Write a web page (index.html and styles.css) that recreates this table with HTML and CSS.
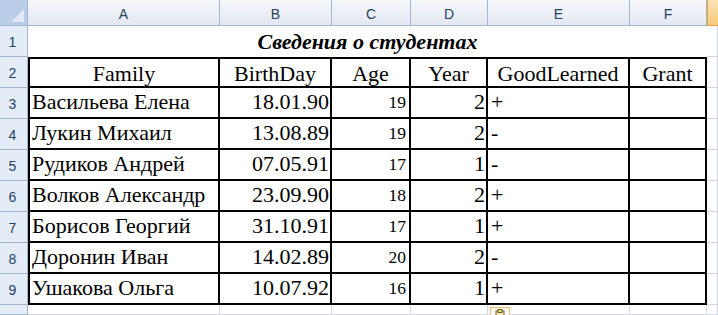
FILE: index.html
```html
<!DOCTYPE html>
<html>
<head>
<meta charset="utf-8">
<link rel="stylesheet" href="styles.css">
</head>
<body>
<div class="sheet">
  <div class="corner"><span class="tri"></span></div>
  <div class="ch">A</div>
  <div class="ch">B</div>
  <div class="ch">C</div>
  <div class="ch">D</div>
  <div class="ch">E</div>
  <div class="ch">F</div>
  <div class="ch sel"></div>

  <div class="rh">1</div>
  <div class="title">Сведения о студентах</div>
  <div class="c"></div>

  <div class="rh">2</div>
  <div class="t hd first">Family</div>
  <div class="t hd">BirthDay</div>
  <div class="t hd">Age</div>
  <div class="t hd">Year</div>
  <div class="t hd">GoodLearned</div>
  <div class="t hd">Grant</div>
  <div class="c"></div>

  <div class="rh">3</div>
  <div class="t first l">Васильева Елена</div>
  <div class="t r">18.01.90</div>
  <div class="t r sm">19</div>
  <div class="t r">2</div>
  <div class="t l">+</div>
  <div class="t"></div>
  <div class="c"></div>

  <div class="rh">4</div>
  <div class="t first l">Лукин Михаил</div>
  <div class="t r">13.08.89</div>
  <div class="t r sm">19</div>
  <div class="t r">2</div>
  <div class="t l">-</div>
  <div class="t"></div>
  <div class="c"></div>

  <div class="rh">5</div>
  <div class="t first l">Рудиков Андрей</div>
  <div class="t r">07.05.91</div>
  <div class="t r sm">17</div>
  <div class="t r">1</div>
  <div class="t l">-</div>
  <div class="t"></div>
  <div class="c"></div>

  <div class="rh">6</div>
  <div class="t first l">Волков Александр</div>
  <div class="t r">23.09.90</div>
  <div class="t r sm">18</div>
  <div class="t r">2</div>
  <div class="t l">+</div>
  <div class="t"></div>
  <div class="c"></div>

  <div class="rh">7</div>
  <div class="t first l">Борисов Георгий</div>
  <div class="t r">31.10.91</div>
  <div class="t r sm">17</div>
  <div class="t r">1</div>
  <div class="t l">+</div>
  <div class="t"></div>
  <div class="c"></div>

  <div class="rh">8</div>
  <div class="t first l">Доронин Иван</div>
  <div class="t r">14.02.89</div>
  <div class="t r sm">20</div>
  <div class="t r">2</div>
  <div class="t l">-</div>
  <div class="t"></div>
  <div class="c"></div>

  <div class="rh">9</div>
  <div class="t first l">Ушакова Ольга</div>
  <div class="t r">10.07.92</div>
  <div class="t r sm">16</div>
  <div class="t r">1</div>
  <div class="t l">+</div>
  <div class="t"></div>
  <div class="c"></div>

  <div class="rh"></div>
  <div class="c"></div>
  <div class="c"></div>
  <div class="c"></div>
  <div class="c"></div>
  <div class="c paste-cell"><span class="paste"><svg width="14" height="10" viewBox="0 0 14 10"><rect x="3" y="2" width="8" height="9" fill="#f3e9b0" stroke="#6b5a2a" stroke-width="1"/><rect x="5" y="0.5" width="4" height="3" fill="#f7e36a" stroke="#6b5a2a" stroke-width="1"/></svg></span></div>
  <div class="c"></div>
  <div class="c"></div>
</div>
</body>
</html>
```
FILE: styles.css
```css
* { box-sizing: border-box; }
html, body { margin: 0; padding: 0; background: #fff; overflow: hidden; }
body { width: 718px; height: 315px; }

.sheet {
  display: grid;
  grid-template-columns: 28px 192px 112px 79px 77px 142px 77px 11px;
  grid-template-rows: 26px repeat(9, 31px) 10px;
  font-family: "Liberation Serif", "Times New Roman", serif;
  font-size: 22px;
  color: #000;
}

.corner {
  background: #b9cde8;
  border-right: 1px solid #9eb6ce;
  border-bottom: 1px solid #9eb6ce;
  position: relative;
}
.corner .tri {
  position: absolute;
  right: 3px;
  bottom: 3px;
  width: 0;
  height: 0;
  border-left: 13px solid transparent;
  border-bottom: 13px solid #dfe8f4;
}

.ch {
  background: linear-gradient(#f6f8fb, #e2e8f1);
  border-right: 1px solid #9eb6ce;
  border-bottom: 1px solid #9eb6ce;
  font-family: "Liberation Sans", Arial, sans-serif;
  font-size: 14px;
  color: #27415f;
  display: flex;
  align-items: center;
  justify-content: center;
  padding-top: 2px;
}
.ch.sel {
  background: linear-gradient(#fbe3b5, #f5c978);
  border-left: 1px solid #f2a03f;
  border-bottom: 1px solid #f2a03f;
  border-right: none;
}

.rh {
  background: #e4ecf7;
  border-right: 1px solid #9eb6ce;
  border-bottom: 1px solid #9eb6ce;
  font-family: "Liberation Sans", Arial, sans-serif;
  font-size: 14px;
  color: #27415f;
  display: flex;
  align-items: flex-end;
  justify-content: center;
  padding-bottom: 7px;
  padding-right: 2px;
  line-height: 14px;
}

.c {
  border-right: 1px solid #d0d7e5;
  border-bottom: 1px solid #d0d7e5;
}

.title {
  grid-column: 2 / 8;
  font-weight: bold;
  font-style: italic;
  display: flex;
  align-items: center;
  justify-content: center;
  line-height: 22px;
  padding-top: 0;
  padding-left: 0;
}

.t {
  border-right: 2px solid #000;
  border-bottom: 2px solid #000;
  display: flex;
  align-items: flex-end;
  line-height: 22px;
  padding: 0 3px 4px 3px;
  white-space: nowrap;
}
.t.first { border-left: 2px solid #000; padding-left: 2px; }
.t.hd {
  border-top: 2px solid #000;
  align-items: center;
  justify-content: center;
  padding: 3px 0 0 0;
}
.t.r { justify-content: flex-end; padding-right: 1px; }
.t.l { justify-content: flex-start; }
.t.sm { font-size: 17.5px; padding-bottom: 4px; padding-right: 3px; }

.paste-cell { position: relative; }
.paste {
  position: absolute;
  left: 2px;
  top: 2px;
  width: 20px;
  height: 14px;
  border: 1px solid #f3bf6e;
  background: #fff;
  display: flex;
  justify-content: center;
  padding-top: 1px;
}
```
